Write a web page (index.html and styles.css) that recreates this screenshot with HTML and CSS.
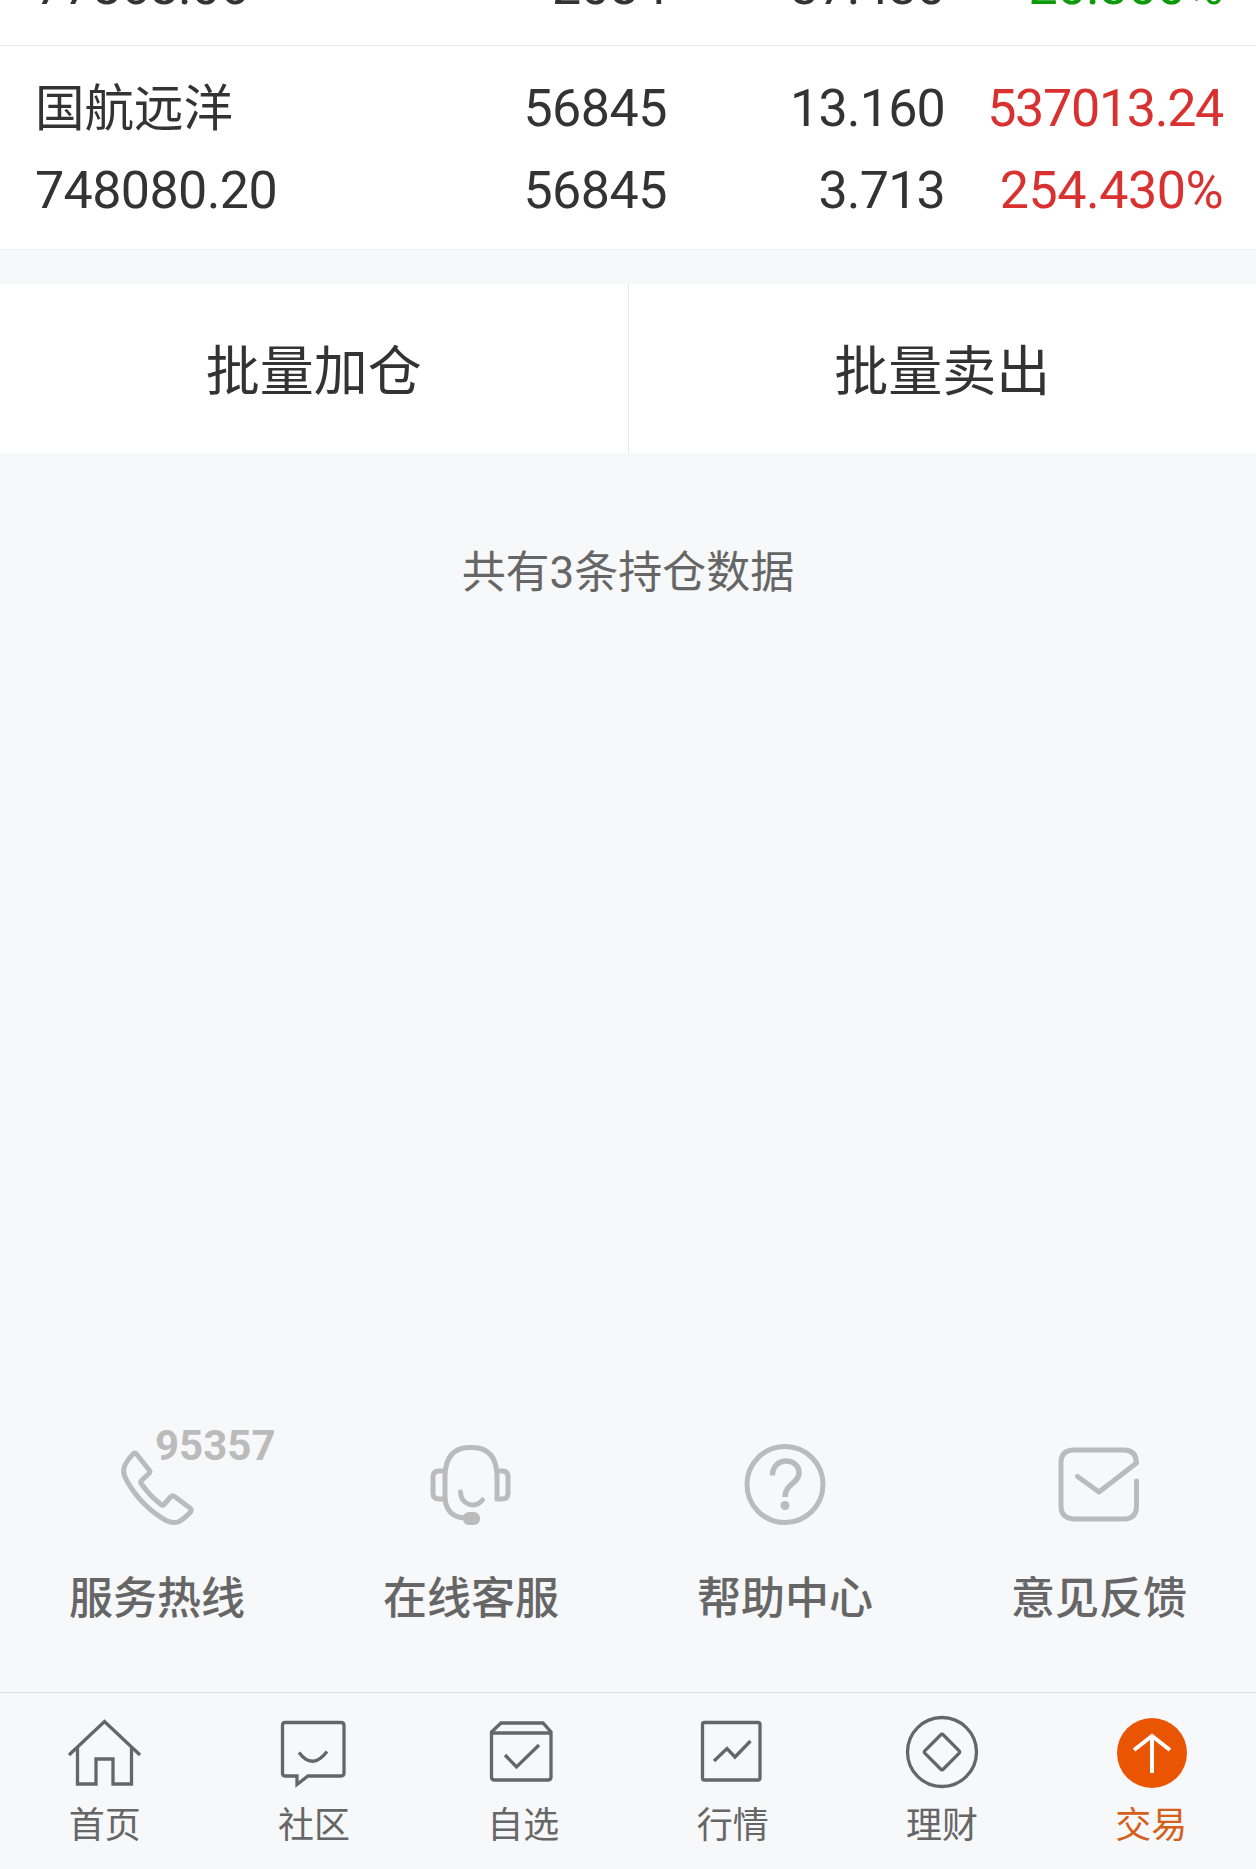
FILE: index.html
```html
<!DOCTYPE html>
<html lang="zh-CN">
<head>
<meta charset="UTF-8" />
<meta name="viewport" content="width=device-width, initial-scale=1.0" />
<title>持仓</title>
<link rel="stylesheet" href="styles.css">
</head>
<body>

<!-- 持仓列表 -->
<div class="holdings">
  <div class="stock stock-clipped">
    <div class="line">
      <span class="col-name">77868.06</span>
      <span class="col-amount">2084</span>
      <span class="col-price">37.430</span>
      <span class="col-profit down">-20.300%</span>
    </div>
  </div>
  <div class="stock">
    <div class="line">
      <span class="col-name stock-name">国航远洋</span>
      <span class="col-amount">56845</span>
      <span class="col-price">13.160</span>
      <span class="col-profit up tight">537013.24</span>
    </div>
    <div class="line">
      <span class="col-name">748080.20</span>
      <span class="col-amount">56845</span>
      <span class="col-price">3.713</span>
      <span class="col-profit up">254.430%</span>
    </div>
  </div>
</div>

<!-- 批量操作 -->
<div class="actions">
  <button class="action">批量加仓</button>
  <button class="action">批量卖出</button>
</div>

<p class="total">共有3条持仓数据</p>

<!-- 客户服务 -->
<div class="services">
  <a class="service">
    <svg class="service-icon" viewBox="0 0 100 100">
      <path d="M26 20 Q27.500 18 29.500 20 L42.500 36.500 Q43.500 38 42 39.500 L34.500 46.500 Q33 48 34.500 50 Q43 62 54 70.500 Q56 72 57.500 70 L63.500 63 Q65.500 61 67.500 62.500 L83 74 Q85 76 83.500 78 Q77 85 72 87.500 Q66 90 59 86.500 Q34 72 20 47 Q14.500 38 18 31 Q21 25 26 20 Z"/>
    </svg>
    <span class="hotline">95357</span>
    <span class="service-label">服务热线</span>
  </a>
  <a class="service">
    <svg class="service-icon" viewBox="0 0 100 100">
      <path d="M24 66 V41 Q25 14 48 13.500 H52 Q75 14 76 41 V65 H81 Q87 65 87 59 V43 Q87 37 81 37 H76"/>
      <path d="M24 37 H18 Q12 37 12 43 V59 Q12 65 18 65 H24 Q26 83 44 84"/>
      <path d="M39.500 58 C40 71 54 75 61.500 66"/>
      <rect class="solid" x="42" y="78" width="17" height="13" rx="6"/>
    </svg>
    <span class="service-label">在线客服</span>
  </a>
  <a class="service">
    <svg class="service-icon" viewBox="0 0 100 100">
      <circle cx="50" cy="50.500" r="38"/>
      <path class="butt" d="M37.500 41.500 C37.500 22 64 23 64 39 C64 49 50 50 50 63"/>
      <circle class="solid" cx="50" cy="71.500" r="4.500"/>
    </svg>
    <span class="service-label">帮助中心</span>
  </a>
  <a class="service">
    <svg class="service-icon" viewBox="0 0 100 100">
      <path d="M87.500 47 V73 Q87 85 75 85 H25 Q12.500 84.500 12 73 V28 Q12.500 16 25 16 H75 Q87 16 87.500 29 L50 58 L28.500 42.500"/>
    </svg>
    <span class="service-label">意见反馈</span>
  </a>
</div>

<!-- 底部导航 -->
<nav class="tabbar">
  <a class="tab">
    <svg class="tab-icon" viewBox="0 0 80 80">
      <path d="M4 43 L39.500 9.500 L75 43"/>
      <path d="M12.500 36 V72 H31 V47 H48 V72 H66.500 V36"/>
    </svg>
    <span>首页</span>
  </a>
  <a class="tab">
    <svg class="tab-icon" viewBox="0 0 80 80">
      <path d="M11 10.500 H67 Q70 10.500 70 13.500 V61 Q70 64 67 64 H34 L23 72.500 V64 H11 Q8.500 64 8.500 61 V13.500 Q8.500 10.500 11 10.500 Z"/>
      <path d="M25 40.500 Q38.500 58.500 53 39.500"/>
    </svg>
    <span>社区</span>
  </a>
  <a class="tab">
    <svg class="tab-icon" viewBox="0 0 80 80">
      <path d="M8.500 20 L18 11 H60 L68 20 V65 Q68 68 65 68 H11.500 Q8.500 68 8.500 65 Z M8.500 21 H68"/>
      <path d="M22 43 L33.500 55 L56 33"/>
    </svg>
    <span>自选</span>
  </a>
  <a class="tab">
    <svg class="tab-icon" viewBox="0 0 80 80">
      <rect x="9.500" y="10.500" width="57.500" height="57.500" rx="2"/>
      <path d="M21 49 L34 36.500 L42 45 L57.500 29"/>
    </svg>
    <span>行情</span>
  </a>
  <a class="tab">
    <svg class="tab-icon" viewBox="0 0 80 80">
      <circle cx="40" cy="40" r="34.500"/>
      <rect x="27" y="27" width="26" height="26" rx="2" transform="rotate(45 40 40)"/>
    </svg>
    <span>理财</span>
  </a>
  <a class="tab active">
    <svg class="tab-icon" viewBox="0 0 80 80">
      <circle class="disc" cx="41" cy="41" r="35"/>
      <path class="arrow" d="M41 61 V24 M23 38 L41 24 L59 38"/>
    </svg>
    <span>交易</span>
  </a>
</nav>

</body>
</html>
```

FILE: styles.css
```css
* {
  box-sizing: border-box;
}

body {
  margin: 0;
  height: 1869px;
  display: flex;
  flex-direction: column;
  overflow: hidden;
  background-color: #f7f8fa;
  color: #333;
  font-family: Roboto, "Noto Sans CJK SC", sans-serif;
}

/* 持仓 */
.holdings {
  background-color: #fff;
}

.stock {
  height: 204px;
  padding: 22px 33px 8px 35px;
  border-bottom: 1px solid #ebebeb;
}

.stock-clipped {
  height: 46px;
  padding-top: 0;
  padding-bottom: 17px;
  display: flex;
  flex-direction: column;
  justify-content: flex-end;
  overflow: hidden;
}

.line {
  display: grid;
  grid-template-columns: 430px 203px 277px 1fr;
  height: 82px;
  line-height: 82px;
  flex-shrink: 0;
  font-size: 52px;
  white-space: nowrap;
}

.col-name {
  letter-spacing: -0.6px;
}

.stock-name {
  font-size: 49.5px;
  letter-spacing: 0;
}

.col-amount,
.col-price,
.col-profit {
  text-align: right;
  letter-spacing: -0.5px;
}

.col-amount {
  padding-right: 1px;
}

.col-price {
  letter-spacing: -0.8px;
}

.col-profit.tight {
  letter-spacing: -1.3px;
}

.up {
  color: #d93030;
}

.down {
  color: #0a9a0a;
}

/* 按钮 */
.actions {
  display: flex;
  height: 169px;
  margin-top: 34px;
  background-color: #fff;
}

.action {
  flex: 1;
  padding: 0 0 3px;
  border: none;
  background: none;
  color: #333;
  font-family: inherit;
  font-size: 54px;
}

.action:first-child {
  border-right: 1px solid #ebebeb;
}

.total {
  margin: 87px 0 0;
  text-align: center;
  line-height: 66px;
  font-size: 44px;
  color: #666;
}

/* 服务 */
.services {
  display: grid;
  grid-template-columns: repeat(4, 1fr);
  height: 258px;
  margin-top: auto;
}

.service {
  position: relative;
  display: flex;
  flex-direction: column;
  align-items: center;
}

.service-icon {
  width: 100px;
  height: 100px;
  fill: none;
  stroke: #bbb;
  stroke-width: 5;
  stroke-linecap: round;
  stroke-linejoin: round;
}

.service-icon .solid {
  fill: #bbb;
  stroke: none;
}

.service-icon .butt {
  stroke-width: 5.5;
  stroke-linecap: butt;
}

/* 电话图标上的号码 */
.hotline {
  position: absolute;
  left: 155px;
  top: -11px;
  font-size: 42px;
  line-height: 46px;
  font-weight: 700;
  color: #bbb;
}

.service-label {
  margin-top: 35px;
  line-height: 60px;
  font-size: 44px;
  font-weight: 500;
  color: #666;
}

/* 底部导航 */
.tabbar {
  display: flex;
  height: 177px;
  border-top: 1px solid #e0e0e2;
}

.tab {
  flex: 1;
  display: flex;
  flex-direction: column;
  align-items: center;
  padding-top: 19px;
  font-size: 36px;
  line-height: 50px;
  color: #666;
}

.tab-icon {
  width: 80px;
  height: 80px;
  margin-bottom: 9px;
  fill: none;
  stroke: #666;
  stroke-width: 3.3;
}

.tab-icon .disc {
  fill: #ea5504;
  stroke: none;
}

.tab-icon .arrow {
  stroke: #fff;
  stroke-width: 4;
}

.tab.active {
  color: #d4601a;
}
```
